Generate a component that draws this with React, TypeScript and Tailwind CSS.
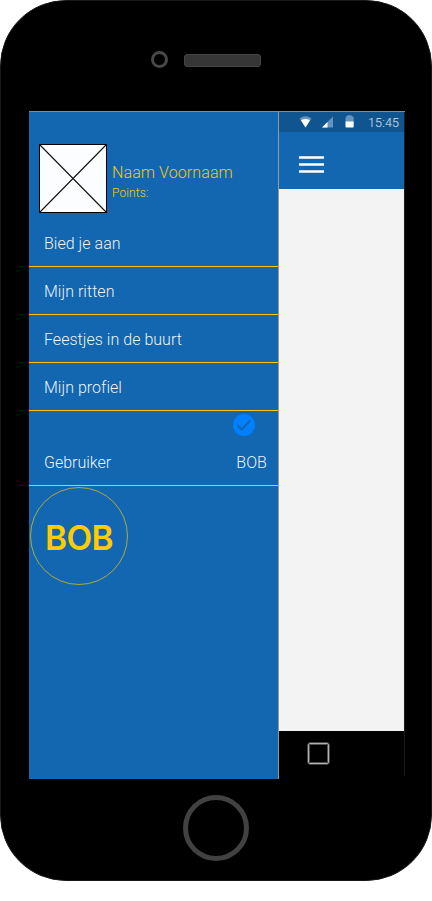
const items = ['Bied je aan', 'Mijn ritten', 'Feestjes in de buurt', 'Mijn profiel'];

function Avatar() {
  return (
    <svg width="68" height="69" viewBox="0 0 68 69" className="block shrink-0">
      <rect x="0.5" y="0.5" width="67" height="68" fill="#fcfdff" stroke="#000" />
      <path d="M0.5 0.5L67.5 68.5M67.5 0.5L0.5 68.5" stroke="#111" strokeWidth="1.1" />
    </svg>
  );
}

function Sidebar() {
  return (
    <aside className="flex w-[250px] shrink-0 flex-col border-r border-[#999] bg-[#1367b0]">
      <div className="flex h-[107px] pt-8 pl-[10px]">
        <Avatar />
        <div className="pt-[18px] pl-[5px] text-[#f0c814]">
          <div className="text-base leading-[22px] tracking-[0.1px]">Naam Voornaam</div>
          <div className="text-xs leading-[18px] tracking-[0.1px]">Points:</div>
        </div>
      </div>
      <nav>
        {items.map((item) => (
          <div key={item} className="flex h-12 items-center border-b border-[#fc0] pt-[2px] pl-[15px] text-base tracking-[0.03px] text-white/95">
            {item}
          </div>
        ))}
      </nav>
      <div className="flex h-[75px] flex-col border-b border-[#fc0] pt-[3px] pr-[11px] pl-[15px]">
        <svg width="22" height="22" viewBox="0 0 22 22" className="mr-3 self-end">
          <circle cx="11" cy="11" r="11" fill="#007fff" />
          <path d="M4.5 11.3L8.7 15.5L17.4 6.4" fill="none" stroke="#1367b0" strokeWidth="2" />
        </svg>
        <div className="mt-[15px] flex justify-between text-base leading-6 text-white/95">
          <span>Gebruiker</span>
          <span className="tracking-[0.1px]">BOB</span>
        </div>
      </div>
      <div className="mt-px ml-[1px] flex size-[98px] items-center justify-center rounded-full border border-[#fc0]/65 pt-1 font-['Inter',sans-serif] text-[33.5px] font-semibold tracking-[-0.7px] text-[#fc0]">
        BOB
      </div>
    </aside>
  );
}

function AppView() {
  return (
    <main className="flex flex-1 flex-col">
      <div className="flex h-5 items-center bg-[#115590] pl-5">
        <svg width="60" height="20" viewBox="0 0 60 20" className="shrink-0">
          <path d="M0.5 6.5Q6.5 2 12.5 6.5L6.5 15.5Z" fill="#6393bf" />
          <path d="M2 8.2Q6.5 5.6 11 8.2L6.5 15.5Z" fill="#fff" />
          <path d="M34 4.5V15.5H23Z" fill="#6393bf" />
          <path d="M28.5 10V15.5H23Z" fill="#fff" />
          <path d="M46.5 10V6Q46.5 4 48.3 4V3.3H52.7V4Q54.7 4 54.7 6V10Z" fill="#6393bf" />
          <path d="M46.5 9.5H54.7V14.5Q54.7 15.5 53.7 15.5H47.5Q46.5 15.5 46.5 14.5Z" fill="#fff" />
        </svg>
        <span className="ml-[9px] pt-[2px] text-[12.5px] leading-5 tracking-[0.15px] text-white/85">15:45</span>
      </div>
      <div className="flex h-[57px] items-center bg-[#1367b0] pt-2 pl-5">
        <svg width="25" height="17" viewBox="0 0 25 17">
          <path d="M0 1.5H25M0 8.5H25M0 15.5H25" stroke="#fff" strokeWidth="2.6" />
        </svg>
      </div>
      <div className="h-[542px] bg-[#f3f3f3]" />
      <div className="flex h-12 pt-[11px] pl-[28px]">
        <div className="size-[23px] rounded-[3px] border border-[#444]">
          <div className="size-[21px] rounded-[2px] border border-[#b0b0b0]">
            <div className="size-[19px] border border-[#505050]" />
          </div>
        </div>
      </div>
    </main>
  );
}

export default function App() {
  return (
    <div className="h-[901px] w-[432px] overflow-hidden bg-white font-['Roboto',sans-serif] font-light text-white">
      <div className="flex h-[881px] flex-col items-center rounded-[66px] border border-[#181818] bg-black">
        <div className="flex h-[110px] w-full pt-[50px] pl-[150px]">
          <div className="size-[17px] rounded-full border-[3px] border-[#484848]" />
          <div className="mt-[3px] ml-4 h-[13px] w-[77px] rounded-[3px] border border-[#444] bg-[#363636]" />
        </div>
        <div className="ml-px flex h-[668px] w-[377px] pl-px">
          <div className="flex w-[376px] border-t border-[#888]">
            <Sidebar />
            <AppView />
            <div className="h-[664px] w-px bg-[#1c1c1c]" />
          </div>
        </div>
        <div className="mt-4 size-[66px] rounded-full border-[5px] border-[#414141]" />
      </div>
    </div>
  );
}
